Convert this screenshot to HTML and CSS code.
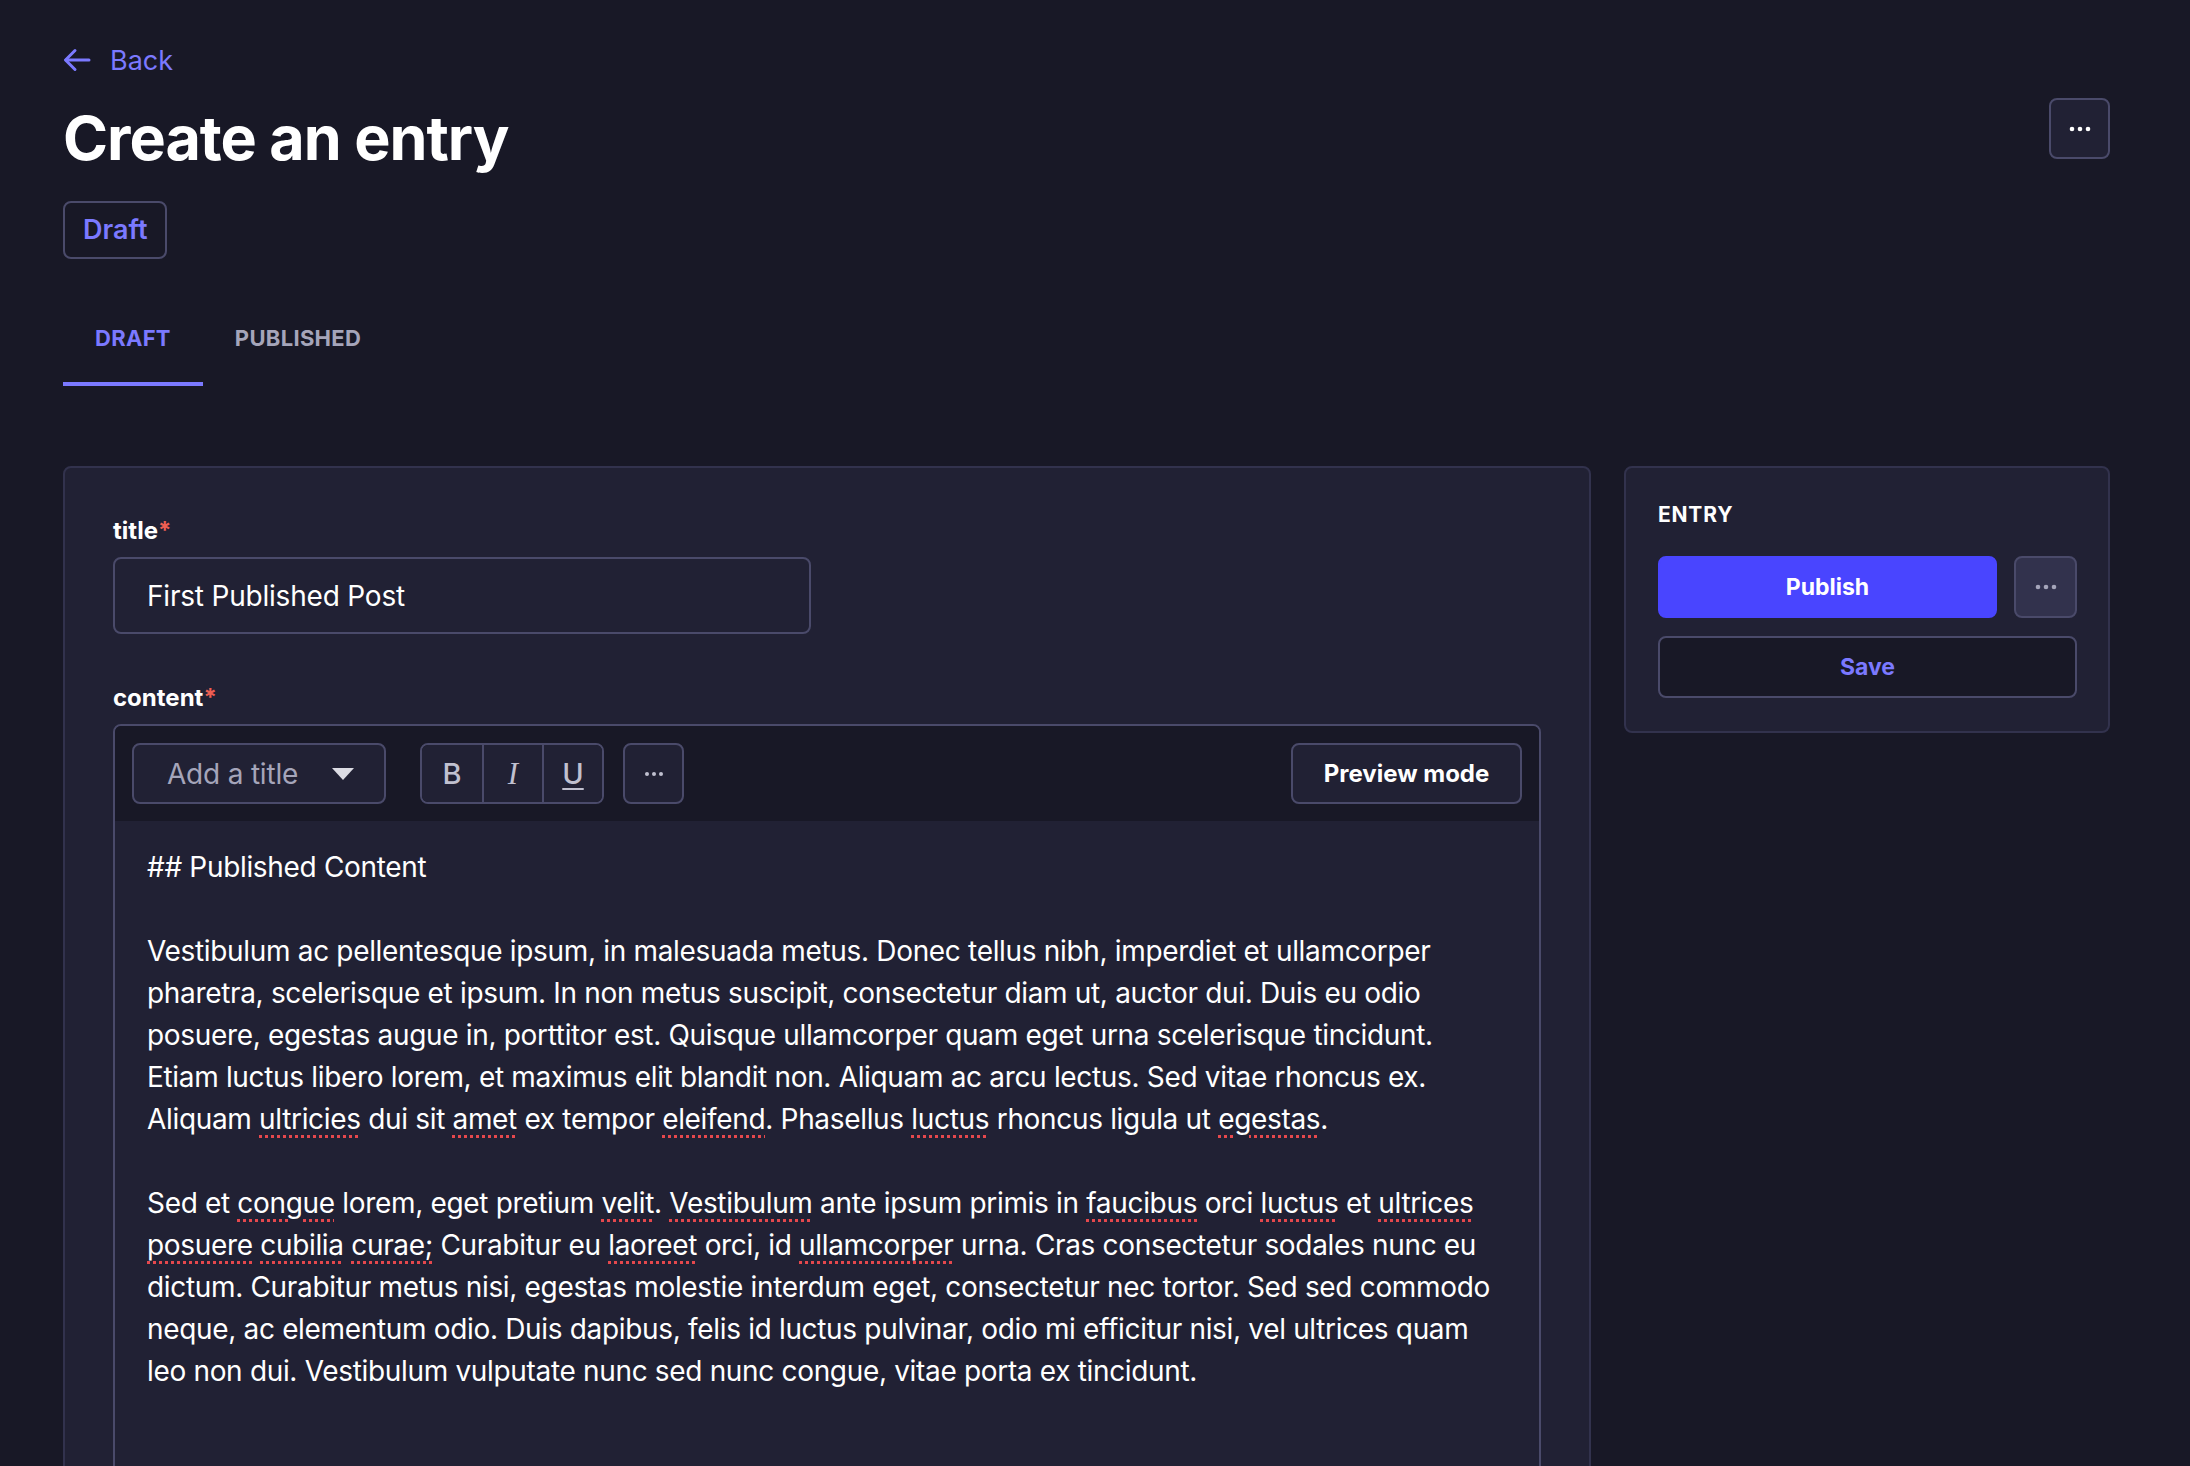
FILE: index.html
```html
<!DOCTYPE html>
<html lang="en">
<head>
    <meta charset="UTF-8">
    <meta name="viewport" content="width=device-width, initial-scale=1.0">
    <title>Create an entry</title>
    <link rel="stylesheet" href="styles.css">
</head>
<body>
    <div class="page">
        <!-- Header -->
        <header class="header">
            <a class="back-link" href="#">
                <svg class="back-icon" width="28" height="24" viewBox="0 0 28 24" fill="none" stroke="currentColor" stroke-width="3" stroke-linecap="round" stroke-linejoin="round">
                    <path d="M26 12H3"/>
                    <path d="M12 2.5L2.5 12l9.5 9.5"/>
                </svg>
                <span>Back</span>
            </a>
            <div class="title-row">
                <h1>Create an entry</h1>
                <button class="icon-btn icon-btn-light" aria-label="More actions">
                    <svg width="22" height="6" viewBox="0 0 22 6" fill="currentColor">
                        <circle cx="3" cy="3" r="2.3"/>
                        <circle cx="11" cy="3" r="2.3"/>
                        <circle cx="19" cy="3" r="2.3"/>
                    </svg>
                </button>
            </div>
            <span class="status-badge">Draft</span>
        </header>

        <!-- Tabs -->
        <nav class="tabs">
            <button class="tab active">Draft</button>
            <button class="tab">Published</button>
        </nav>

        <div class="layout">
            <!-- Edit form -->
            <main class="edit-card">
                <div class="field">
                    <label class="field-label" for="title">title<span class="required">*</span></label>
                    <input class="text-input" id="title" type="text" value="First Published Post">
                </div>

                <div class="field field-content">
                    <label class="field-label">content<span class="required">*</span></label>
                    <div class="editor">
                        <div class="toolbar">
                            <div class="select">
                                <span>Add a title</span>
                                <svg width="22" height="12" viewBox="0 0 22 12" fill="currentColor">
                                    <path d="M0 0h22L11 12z"/>
                                </svg>
                            </div>
                            <div class="btn-group">
                                <button class="tool-btn tool-bold">B</button>
                                <button class="tool-btn tool-italic">I</button>
                                <button class="tool-btn tool-underline">U</button>
                            </div>
                            <button class="tool-btn tool-more" aria-label="More">
                                <svg width="20" height="6" viewBox="0 0 20 6" fill="currentColor">
                                    <circle cx="3" cy="3" r="2"/>
                                    <circle cx="10" cy="3" r="2"/>
                                    <circle cx="17" cy="3" r="2"/>
                                </svg>
                            </button>
                            <button class="preview-btn">Preview mode</button>
                        </div>
                        <div class="editor-body">
                            <div class="line">## Published Content</div>
                            <div class="line">&nbsp;</div>
                            <div class="line">Vestibulum ac pellentesque ipsum, in malesuada metus. Donec tellus nibh, imperdiet et ullamcorper</div>
                            <div class="line">pharetra, scelerisque et ipsum. In non metus suscipit, consectetur diam ut, auctor dui. Duis eu odio</div>
                            <div class="line">posuere, egestas augue in, porttitor est. Quisque ullamcorper quam eget urna scelerisque tincidunt.</div>
                            <div class="line">Etiam luctus libero lorem, et maximus elit blandit non. Aliquam ac arcu lectus. Sed vitae rhoncus ex.</div>
                            <div class="line">Aliquam <span class="typo">ultricies</span> dui sit <span class="typo">amet</span> ex tempor <span class="typo">eleifend</span>. Phasellus <span class="typo">luctus</span> rhoncus ligula ut <span class="typo">egestas</span>.</div>
                            <div class="line">&nbsp;</div>
                            <div class="line">Sed et <span class="typo">congue</span> lorem, eget pretium <span class="typo">velit</span>. <span class="typo">Vestibulum</span> ante ipsum primis in <span class="typo">faucibus</span> orci <span class="typo">luctus</span> et <span class="typo">ultrices</span></div>
                            <div class="line"><span class="typo">posuere</span> <span class="typo">cubilia</span> <span class="typo">curae;</span> Curabitur eu <span class="typo">laoreet</span> orci, id <span class="typo">ullamcorper</span> urna. Cras consectetur sodales nunc eu</div>
                            <div class="line">dictum. Curabitur metus nisi, egestas molestie interdum eget, consectetur nec tortor. Sed sed commodo</div>
                            <div class="line">neque, ac elementum odio. Duis dapibus, felis id luctus pulvinar, odio mi efficitur nisi, vel ultrices quam</div>
                            <div class="line">leo non dui. Vestibulum vulputate nunc sed nunc congue, vitae porta ex tincidunt.</div>
                        </div>
                    </div>
                </div>
            </main>

            <!-- Side panel -->
            <aside class="side-card">
                <div class="side-title">Entry</div>
                <div class="publish-row">
                    <button class="btn btn-primary">Publish</button>
                    <button class="icon-btn icon-btn-muted" aria-label="More">
                        <svg width="22" height="6" viewBox="0 0 22 6" fill="currentColor">
                            <circle cx="3" cy="3" r="2.3"/>
                            <circle cx="11" cy="3" r="2.3"/>
                            <circle cx="19" cy="3" r="2.3"/>
                        </svg>
                    </button>
                </div>
                <button class="btn btn-secondary">Save</button>
            </aside>
        </div>
    </div>
</body>
</html>
```

FILE: styles.css
```css
/* Dark theme content editor */
html,
body {
    height: 100%;
}

body {
    margin: 0;
    background: #181826;
    color: #ffffff;
    font-family: Inter, 'Noto Sans', 'Liberation Sans', sans-serif;
    overflow: hidden;
}

button {
    font-family: inherit;
    cursor: pointer;
}

.page {
    padding: 42px 80px 0 63px;
}

/* Header */
.back-link {
    display: inline-flex;
    align-items: center;
    gap: 19px;
    height: 36px;
    color: #7b79ff;
    font-size: 27px;
    text-decoration: none;
}

.back-icon {
    display: block;
}

.title-row {
    display: flex;
    justify-content: space-between;
    align-items: flex-start;
    margin-top: 20px;
}

.title-row h1 {
    margin: 4px 0 0;
    font-size: 61px;
    line-height: 72px;
    font-weight: 700;
    letter-spacing: -1px;
}

.status-badge {
    display: inline-block;
    margin-top: 27px;
    height: 54px;
    padding: 0 18px;
    border: 2px solid #4a4a6a;
    border-radius: 8px;
    color: #7b79ff;
    font-size: 27px;
    font-weight: 600;
    line-height: 54px;
}

/* Icon buttons */
.icon-btn {
    display: flex;
    align-items: center;
    justify-content: center;
    width: 61px;
    height: 61px;
    padding: 0;
    border: 2px solid #4a4a6a;
    border-radius: 8px;
    background: #212134;
    color: #ffffff;
}

.icon-btn-muted {
    width: 63px;
    height: 62px;
    background: #32324d;
    color: #a5a5ba;
}

/* Tabs */
.tabs {
    display: flex;
    margin-top: 51px;
}

.tab {
    padding: 14px 32px 30px;
    border: 0;
    border-bottom: 4px solid transparent;
    background: none;
    color: #a5a5ba;
    font-size: 22px;
    font-weight: 700;
    line-height: 28px;
    letter-spacing: 0.3px;
    text-transform: uppercase;
}

.tab.active {
    color: #7b79ff;
    border-bottom-color: #7b79ff;
}

/* Main layout */
.layout {
    display: flex;
    align-items: flex-start;
    gap: 33px;
    margin-top: 80px;
}

.edit-card {
    flex: 1;
    min-width: 0;
    min-height: 1200px;
    padding: 47px 48px;
    background: #212134;
    border: 2px solid #32324d;
    border-radius: 8px;
}

.field {
    display: flex;
    flex-direction: column;
    gap: 10px;
}

.field-content {
    margin-top: 48px;
}

.field-label {
    font-size: 24px;
    font-weight: 700;
    line-height: 32px;
}

.required {
    color: #ee5e52;
}

.text-input {
    box-sizing: border-box;
    width: 698px;
    height: 77px;
    padding: 0 32px;
    border: 2px solid #4a4a6a;
    border-radius: 8px;
    background: #212134;
    color: #ffffff;
    font-family: inherit;
    font-size: 28px;
    letter-spacing: -0.2px;
    outline: none;
}

/* Editor */
.editor {
    border: 2px solid #4a4a6a;
    border-radius: 8px;
    overflow: hidden;
}

.toolbar {
    display: flex;
    align-items: center;
    padding: 17px;
    background: #181826;
}

.select {
    box-sizing: border-box;
    display: flex;
    align-items: center;
    justify-content: space-between;
    width: 254px;
    height: 61px;
    padding: 0 30px 0 33px;
    border: 2px solid #4a4a6a;
    border-radius: 8px;
    background: #212134;
    color: #a5a5ba;
    font-size: 28px;
    letter-spacing: -0.2px;
}

.select svg {
    color: #dcdce4;
}

.btn-group {
    display: flex;
    margin-left: 34px;
    border: 2px solid #4a4a6a;
    border-radius: 8px;
    overflow: hidden;
}

.tool-btn {
    display: flex;
    align-items: center;
    justify-content: center;
    width: 60px;
    height: 57px;
    padding: 0;
    border: 0;
    background: #212134;
    color: #c0c0cf;
    font-size: 29px;
}

.btn-group .tool-btn + .tool-btn {
    border-left: 2px solid #4a4a6a;
}

.tool-bold {
    font-weight: 500;
}

.tool-italic {
    font-family: 'Liberation Serif', serif;
    font-style: italic;
    font-size: 31px;
}

.tool-underline {
    font-weight: 500;
    text-decoration: underline;
    text-decoration-thickness: 2px;
    text-underline-offset: 4px;
}

.tool-more {
    width: 61px;
    height: 61px;
    margin-left: 19px;
    border: 2px solid #4a4a6a;
    border-radius: 8px;
}

.preview-btn {
    margin-left: auto;
    width: 231px;
    height: 61px;
    border: 2px solid #4a4a6a;
    border-radius: 8px;
    background: #212134;
    color: #ffffff;
    font-size: 24px;
    font-weight: 700;
}

.editor-body {
    min-height: 800px;
    padding: 25px 32px;
    font-size: 28px;
    line-height: 42px;
    letter-spacing: -0.33px;
}

.line {
    white-space: nowrap;
}

/* Spell-check marks */
.typo {
    text-decoration: underline dotted #e5484d;
    text-decoration-thickness: 3px;
    text-underline-offset: 6px;
}

/* Side panel */
.side-card {
    width: 486px;
    flex-shrink: 0;
    box-sizing: border-box;
    padding: 33px 31px 33px 32px;
    background: #212134;
    border: 2px solid #32324d;
    border-radius: 8px;
}

.side-title {
    font-size: 21px;
    font-weight: 700;
    line-height: 28px;
    letter-spacing: 0.8px;
    text-transform: uppercase;
}

.publish-row {
    display: flex;
    gap: 17px;
    margin-top: 27px;
}

.btn {
    height: 62px;
    border-radius: 8px;
    font-size: 23px;
    font-weight: 700;
}

.btn-primary {
    flex: 1;
    border: 2px solid #4945ff;
    background: #4945ff;
    color: #ffffff;
}

.btn-secondary {
    width: 100%;
    margin-top: 18px;
    border: 2px solid #4a4a6a;
    background: #181826;
    color: #7b79ff;
}
```
